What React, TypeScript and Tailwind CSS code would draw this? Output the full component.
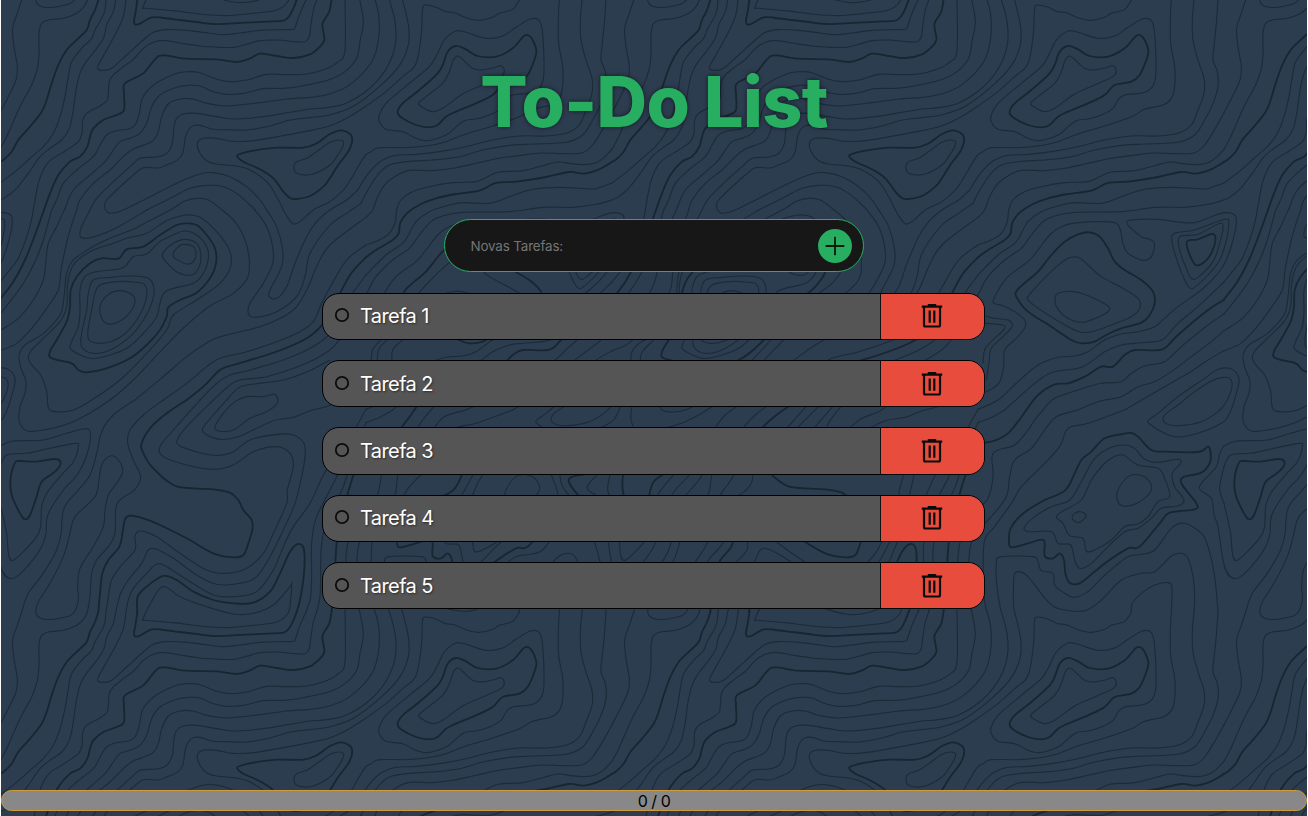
import React, { useState } from "react";

type Contour = { p: string; thick?: boolean; closed?: boolean };
type Region = { x: number; y: number; lines: Contour[] };

const o = (p: string, thick = false): Contour => ({ p, thick });
const c = (p: string, thick = false): Contour => ({ p, thick, closed: true });

// Elevation samples of the repeating topographic tile, grouped by map region.
const regions: Region[] = [
  {
    x: 0,
    y: 0,
    lines: [
      o("65,0 52,40 38,85 42,140 52,200 48,240 25,290 0,338"),
      o("262,0 252,20 230,40 190,55 150,59 125,70 117,100 117,160 112,205 95,255 60,320 20,410 0,448"),
      o("295,0 285,30 270,60 260,90 235,115 200,150 175,195 155,250 140,300 125,335 90,380 55,420 35,455 10,480 0,485", true),
      o("318,0 312,40 285,90 275,115 245,145 215,185 205,230 195,290 180,350 160,400 130,440 90,475 45,515 0,549"),
      o("347,0 340,35 320,75 312,110 290,145 255,190 240,220 228,270 220,330 208,385 185,420 150,445 120,470 85,520 50,565 20,590 0,600"),
      o("378,0 370,50 350,95 320,150 295,195 294,207 310,211 335,205 380,165 430,120 460,97 500,89 560,91 610,97 665,104 720,99 780,91 850,89 880,88 887,78 900,40 918,0"),
      o("412,0 407,35 402,62 405,73 420,71 455,52 490,54 540,60 590,66 640,72 700,70 740,68 800,65 850,62 868,48 880,25 890,0", true),
      o("950,0 940,30 932,80 928,110 915,125 885,125 830,120 780,122 740,133 700,142 660,142 600,138 540,129 490,121 460,127 430,145 400,178 370,200 340,225 328,245 325,280 322,300 300,318 260,340 248,360 246,400 235,425 200,450 150,482 130,510 115,550 105,600 100,630"),
      o("996,-11 988,34 968,69 970,95 973,120 960,140 930,163 880,174 830,168 780,161 750,175 710,186 650,178 560,176 490,166 465,178 430,220 375,250 372,280 372,330 350,345 310,360 280,385 270,410 262,440 240,470 210,485 175,525 150,580 132,630", true),
      o("1035,-11 1035,150 1015,185 975,208 920,222 860,224 800,223 740,240 690,245 650,238 600,218 565,215 530,220 470,248 440,275 425,300 418,340 405,375 385,387 345,393 320,405 300,435 280,470 230,510 190,550 170,600 155,630"),
      o("1077,-11 1090,64 1080,124 1070,175 1035,215 985,240 910,257 850,265 790,266 730,280 680,283 640,275 600,258 565,256 530,262 480,285 455,320 440,370 420,400 390,415 360,425 340,450 315,485 270,525 220,570 195,625"),
      o("1122,-11 1136,44 1136,114 1116,184 1050,254 985,283 930,292 860,297 780,308 680,318 620,310 580,297 540,297 505,312 485,350 475,395 455,425 400,447 370,470 330,510 280,550 240,600 230,630"),
      o("1165,-11 1185,64 1186,134 1160,204 1110,264 1040,309 980,323 930,327 870,337 790,350 710,357 650,350 590,340 550,342 530,355 522,380 517,430 500,460 470,471 420,475 390,500 340,545 290,595 270,630"),
      o("1205,-11 1225,74 1225,134 1200,194 1145,254 1060,319 990,344 930,353 870,360 810,378 740,390 680,389 640,388 600,376 575,380 558,405 548,460 530,482 500,495 475,504 430,503 400,525 350,570 320,600 313,618 325,638 345,638 375,628 450,590 540,545 600,522 640,518 690,530 740,560 780,600 800,630"),
      o("930,392 850,407 760,422 700,424 650,415 610,415 592,430 600,460 620,482 650,492 700,497 750,510 800,545 830,590 850,630"),
      c("990,402 950,430 910,443 830,443 760,452 720,462 712,470 730,485 780,508 820,535 850,575 870,594 890,597 930,588 970,560 990,534 1015,494 1048,449 1055,409 1025,391", true),
      c("990,427 950,455 920,475 890,485 882,505 895,522 940,522 990,495 1010,470 1028,440 1030,424 1015,420"),
      o("440,630 520,590 570,565 620,556 670,560 710,580 750,615 765,630"),
    ],
  },
  {
    x: 0,
    y: 600,
    lines: [
      o("100,30 92,70 80,110 55,175 25,215 0,245"),
      o("132,30 105,105 75,180 40,245 0,298", true),
      o("155,30 130,120 105,185 70,250 30,305 0,342"),
      o("195,25 170,80 145,130 137,190 130,240 100,300 55,355 0,392"),
      o("230,30 210,90 195,150 183,210 175,270 140,325 95,385 50,430 0,452"),
      c("515,28 430,72 400,88 330,115 270,145 220,180 200,220 192,290 180,345 130,400 75,435 57,465 62,500 78,545 75,580 60,620 58,665 80,692 130,690 220,665 330,600 410,530 490,445 560,375 630,318 700,280 742,235 748,180 735,120 705,65 660,25 625,0 590,-5 550,5"),
      c("145,622 140,575 125,530 100,500 85,475 95,450 130,415 180,365 200,320 203,250 220,195 270,155 340,130 380,115 440,100 500,62 560,45 600,52 650,95 688,150 692,200 660,250 590,300 520,345 500,390 440,460 360,540 275,600 220,630 165,635"),
      o("270,30 245,80 240,108 255,115 290,108 350,83 440,30"),
      c("560,70 590,75 620,105 645,145 648,190 630,235 590,278 540,300 505,322 500,350 480,390 440,435 390,475 320,505 260,517 235,510 215,490 155,475 150,455 170,420 200,365 210,320 212,270 230,230 270,190 305,175 355,176 380,148 430,140 480,105 530,75", true),
      c("553,93 590,105 620,140 625,175 610,220 580,250 500,272 480,310 470,350 430,400 380,445 320,468 270,475 215,450 213,430 235,380 240,330 240,270 255,230 290,215 350,208 375,200 400,170 440,162 480,125 520,105"),
      c("555,118 590,130 602,160 598,200 575,225 530,215 490,175 492,155 520,130"),
      c("550,133 580,140 588,165 580,185 560,192 525,175 520,160 535,140"),
      c("400,228 445,235 462,265 455,310 430,360 390,410 330,450 280,460 245,440 245,400 260,330 265,280 280,240 330,232"),
      c("300,255 350,245 400,246 435,255 438,300 410,360 370,405 320,428 275,425 263,400 275,330 285,280"),
      c("330,280 360,272 390,280 405,300 395,330 365,360 325,372 303,350 303,310"),
      o("850,30 865,55 880,72 900,65 940,30 990,5 1030,-30 1055,-66"),
      o("800,30 830,80 848,150 845,200 810,270 808,290 830,295 860,260 885,190 920,110 950,65 990,30 1040,0 1073,-30"),
      o("765,30 800,80 818,140 818,190 790,250 750,310 745,340 765,352 830,335 890,290 915,230 930,160 990,75 1040,40 1083,10"),
      o("405,600 490,530 560,470 640,418 700,400 780,380 850,350 890,320 925,260 950,200 990,135 1098,52"),
      o("490,600 560,550 620,500 660,475 740,455 830,425 900,395 940,365 965,310 990,262 1040,180 1098,135"),
      o("560,600 610,560 660,510 700,495 800,465 880,435 935,405 975,365 1000,320 1050,225 1098,172", true),
      o("600,600 650,550 690,525 750,510 850,480 930,445 990,400 1030,320 1098,225"),
      o("640,600 690,555 720,540 800,530 880,505 950,475 1010,430 1050,350 1098,285"),
      c("740,590 790,590 825,583 832,610 800,635 750,655 700,690 655,693 645,680 670,640 705,605"),
      o("990,480 930,512 850,540 740,555 710,568 680,600"),
    ],
  },
  {
    x: 0,
    y: 1200,
    lines: [
      o("405,0 340,45 305,95 290,160 270,225 235,270 200,310 188,340 183,400 170,450 130,520 85,580 65,636"),
      o("490,0 430,45 390,90 383,130 400,180 422,230 405,268 360,300 347,330 345,400 325,440 290,480 275,520 270,590 262,636"),
      c("330,168 355,180 368,215 350,250 325,285 315,330 310,380 280,440 240,505 233,560 235,600 220,640 180,655 130,657 108,640 115,605 150,550 190,470 210,400 225,350 285,290 297,240 305,195"),
      o("560,0 500,40 450,85 425,130 428,155 455,200 520,255 580,265 640,268 690,278 715,300 730,330 755,360 757,390 745,430 730,465 700,472 640,460 560,415 480,375 430,355 390,347 375,358 368,395 358,440 325,480 307,520 300,580 295,636", true),
      o("600,0 520,90 480,140 490,170 560,195 640,208 700,195 760,155 830,140 870,160 880,200 862,270 860,310 820,400 790,460 740,505 680,520 620,510 540,460 470,410 420,393 405,410 405,450 365,495 335,540 325,590 318,636"),
      o("640,0 560,80 532,120 540,138 600,158 650,166 700,155 750,120 830,103 880,105 912,130 915,170 905,230 885,310 850,390 810,470 770,530 720,550 650,553 590,525 520,475 470,448 445,450 425,490 385,540 362,580 347,636"),
      o("680,0 640,45 608,85 620,104 660,118 710,112 760,90 820,62 880,52 930,32 985,18 1040,-10"),
      o("1010,165 970,225 930,310 880,380 850,440 820,510 770,575 700,590 640,585 570,545 500,500 470,492 440,520 400,565 385,600 378,636"),
      o("412,636 413,590 440,560 490,528 530,540 580,575 640,600 700,610 760,608 810,575 840,520 870,455 895,432 912,450 912,520 900,600 890,636", true),
      c("430,655 460,595 480,565 500,562 540,590 620,620 700,642 760,640 820,615 870,560 875,550 872,600 864,640 830,666 760,676 680,683 600,678 520,668 440,661"),
      o("1098,28 1050,120 1010,230 950,350 935,430 935,520 932,590 918,636"),
      o("1098,68 1060,160 1030,260 985,350 965,430 962,520 960,590 950,636"),
      o("1118,128 1070,200 1030,330 1010,430 1005,520 1000,590 996,625", true),
      o("1098,325 1055,390 1040,450 1035,550 1035,625"),
      o("1098,390 1075,440 1070,520 1077,625"),
      o("0,138 40,123 130,120 200,100 250,87 270,95 265,150 235,220 190,270 150,330 140,360 138,400 125,440 90,490 50,530 27,535 8,515 0,495"),
      o("0,200 20,165 80,160 150,145 225,130 235,140 220,185 180,230 140,280 125,320 122,380 110,410 70,455 37,482 25,460 20,400 0,310"),
      c("45,188 60,183 110,185 165,177 182,190 165,215 125,245 110,290 90,345 75,358 60,340 35,285 32,235", true),
    ],
  },
  {
    x: 1098,
    y: 0,
    lines: [
      o("460,0 440,28 400,40 380,52 340,61 300,53 265,38 240,35 210,22 180,15 170,25 167,90 158,160 145,200 110,230 60,275 0,318 -50,350 -110,378 -168,392"),
      c("270,93 300,97 360,115 410,108 450,82 490,58 515,58 527,80 533,150 533,230 522,262 495,278 440,285 420,300 405,325 370,345 330,357 295,362 265,385 240,405 185,422 150,415 110,395 60,388 40,365 40,345 60,310 130,250 190,200 215,160 235,120"),
      c("270,138 300,148 335,168 390,170 440,145 475,107 495,112 511,150 505,180 485,225 460,245 410,255 380,285 330,310 270,335 240,350 215,375 190,382 150,375 105,352 95,335 110,310 160,270 215,220 232,190 245,155", true),
      c("275,168 290,178 320,205 345,210 385,203 405,197 415,212 405,230 350,255 290,282 230,325 200,335 170,322 158,310 180,290 230,250 250,215 262,180"),
      o("580,0 577,60 578,130 590,200 590,260 580,295 555,315 500,328 460,350 380,378 300,402 240,425 180,438 120,443 40,443 15,455 -5,470 -43,534"),
      o("648,0 643,60 645,120 660,180 678,235 678,280 660,330 640,375 600,400 540,408 460,408 380,420 300,440 220,455 150,463 90,466 50,480 20,505 0,530 -25,570"),
      o("720,0 715,70 708,140 705,180 718,215 720,260 705,310 680,360 650,405 600,427 500,432 430,436 350,450 280,470 200,480 130,484 70,495 35,525 0,580 -15,610"),
      o("738,338 715,380 680,435 650,458 600,461 530,459 480,464 400,475 330,490 260,505 200,512 130,511 95,525 60,550 35,590 20,630 0,652"),
      o("738,448 715,472 690,488 650,494 610,490 575,486 530,497 470,512 400,516 365,530 330,545 260,548 190,560 140,575 105,600 92,630 88,665 70,700 40,720 0,735"),
      o("738,485 720,497 690,512 650,521 610,516 540,531 450,545 390,549 340,572 270,582 210,595 165,612 125,638 103,668 98,700 80,720 30,750 0,772", true),
      o("738,549 700,562 680,567 580,562 500,568 430,590 370,610 290,608 240,618 190,635 150,665 130,700 110,730 60,765 0,825"),
    ],
  },
  {
    x: 1098,
    y: 600,
    lines: [
      o("738,0 690,13 620,22 530,22 430,35 290,37 230,48 195,65 160,105 130,145 80,180 30,230 0,285"),
      o("738,300 690,330 600,405 560,445 530,451 470,450 440,465 405,500 370,500 320,530 270,550 230,553 180,585 145,630", true),
      o("738,246 660,320 600,370 560,415 530,425 470,430 430,435 380,455 340,485 300,505 220,518 170,550 80,630"),
      o("0,628 60,600 120,545 180,495 240,472 290,468 330,455 380,420 430,402 480,395 530,380 560,355 600,320 670,270 720,220 745,180 765,120 775,70 770,45 740,38 700,50 650,68 600,66 540,58 460,60 447,70 465,90 490,110 520,120 530,133 520,170 495,181 450,160 435,130 427,90 415,70 380,65 300,68 250,80 215,105 180,150 150,185 90,230 50,290 48,310 75,317 110,335 140,360 140,385 110,420 80,450 77,500 65,545 45,565 25,575"),
      o("15,345 50,355 90,360 103,378 75,410 40,445 33,490 25,540"),
      o("20,370 75,375 78,388 45,420 20,450 15,490"),
      c("300,103 335,97 365,110 390,145 410,185 440,210 490,240 525,275 530,310 515,345 490,368 430,385 390,402 350,425 310,430 280,420 220,380 150,335 115,290 118,270 145,245 180,215 220,165 260,125", true),
      c("270,175 300,172 330,195 370,230 430,262 480,295 485,325 460,350 400,375 350,393 310,397 270,380 200,338 155,305 150,290 180,255 230,205"),
      c("240,280 280,274 325,285 390,318 390,335 360,352 320,366 290,364 255,345 233,315 232,293"),
      c("590,100 650,90 740,58 752,70 745,120 725,180 690,225 650,262 635,263 620,240 600,190 582,125"),
      c("605,110 660,103 725,70 735,85 725,130 705,185 660,232 640,235 625,205 605,150"),
      c("630,122 660,118 700,102 712,110 708,140 690,175 660,196 645,185 627,140", true),
      o("738,342 690,375 610,440 560,485 500,498 460,520 430,545 370,550 300,570 230,595 195,630"),
      o("738,392 700,425 640,470 580,515 530,545 480,560 430,590 360,605 300,630"),
      o("738,452 690,480 630,520 560,560 440,630"),
      c("540,640 600,590 680,535 720,508 760,507 783,535 775,580 755,640 730,670 660,700 600,711 560,700 515,672 512,660"),
      c("730,533 755,535 762,560 745,605 720,635 670,665 600,677 560,668 560,645 600,615 650,575 700,543"),
    ],
  },
  {
    x: 1098,
    y: 1200,
    lines: [
      o("145,30 120,65 90,100 50,122 20,128", true),
      o("80,30 45,50 0,68"),
      o("195,30 170,60 150,90 110,135 60,150 42,170 45,230 30,295 0,325"),
      o("300,30 235,50 200,90 160,145 110,180 95,230 85,290 40,350 0,390"),
      o("440,30 330,70 270,85 245,140 190,200 130,260 100,310 50,380 18,430 18,580 24,625"),
      c("435,102 460,99 480,110 520,150 560,155 660,156 690,140 698,160 695,190 670,218 615,232 613,255 655,310 650,328 575,338 545,370 485,440 450,445 390,483 350,515 305,550 275,548 262,520 258,480 245,460 225,475 200,468 197,420 150,430 100,442 93,420 98,385 130,345 190,305 260,272 290,220 310,180 340,155 380,115", true),
      c("440,135 470,145 500,178 540,187 600,178 608,190 583,220 590,260 618,300 600,318 550,325 520,355 480,385 440,395 390,440 340,490 305,505 290,480 278,435 240,430 220,395 150,395 140,380 170,350 220,320 275,300 310,245 350,175 400,142"),
      c("435,165 480,195 540,205 560,235 575,290 540,305 510,350 480,372 440,380 400,420 350,450 325,453 315,415 275,407 255,370 235,350 260,330 310,300 340,240 375,195 405,172"),
      c("420,270 450,230 485,225 515,245 518,275 480,308 435,318 418,300"),
      c("285,345 305,335 325,347 305,367 285,360"),
      o("67,625 57,560 55,490 70,470 165,470 180,485 190,512 225,520 230,555 260,580 290,592 330,575 370,535 410,500 450,470 490,463 530,450 580,385 620,370 670,400 690,440 710,530 720,636"),
      o("107,625 106,600 108,530 120,515 150,530 210,605 250,628 320,632 370,600 430,540 490,520 530,515 580,468 610,460 630,475 645,530 650,590 648,636"),
      o("460,636 462,612 490,580 530,555 570,548 582,565 580,636"),
      o("738,138 725,160 715,200 670,250 667,270 700,295 708,345 720,380 735,480 750,525 765,535"),
      o("738,200 725,265 738,310"),
    ],
  },
];

// Smooth curve through a list of samples.
function trace(line: Contour): string {
  const pts = line.p.split(" ").map((s) => s.split(",").map(Number));
  const n = pts.length;
  const at = (i: number) =>
    line.closed ? pts[(i + n) % n] : pts[Math.max(0, Math.min(n - 1, i))];
  let d = `M${pts[0][0]} ${pts[0][1]}`;
  const end = line.closed ? n : n - 1;
  for (let i = 0; i < end; i++) {
    const [a, b, e, f] = [at(i - 1), at(i), at(i + 1), at(i + 2)];
    d += `C${b[0] + (e[0] - a[0]) / 6} ${b[1] + (e[1] - a[1]) / 6} ${e[0] - (f[0] - b[0]) / 6} ${e[1] - (f[1] - b[1]) / 6} ${e[0]} ${e[1]}`;
  }
  return line.closed ? d + "Z" : d;
}

function Topography() {
  return (
    <svg className="absolute inset-0" width="1308" height="816" aria-hidden="true">
      <defs>
        <g id="contours" fill="none" strokeLinecap="round" transform="scale(0.33333)">
          {regions.map((r, i) => (
            <g key={i} transform={`translate(${r.x} ${r.y})`}>
              {r.lines.map((l, j) => (
                <path
                  key={j}
                  d={trace(l)}
                  stroke={l.thick ? "#182631" : "#1c2b38"}
                  strokeWidth={l.thick ? 5.4 : 3.3}
                />
              ))}
            </g>
          ))}
        </g>
      </defs>
      {[-612, 0, 612].map((y) =>
        [-612, 0, 612, 1224].map((x) => <use key={`${x}${y}`} href="#contours" x={x} y={y} />)
      )}
    </svg>
  );
}

function TrashIcon() {
  return (
    <svg width="24" height="26" viewBox="0 0 24 26" fill="none" stroke="#0b0b0b" strokeWidth="2.2">
      <path d="M1.8 3.6H22.2M7.8 2.2H16.2" />
      <path d="M4 3.5V22Q4 23.5 5.5 23.5H18.5Q20 23.5 20 22V3.5" />
      <path d="M9.7 7.5V19.8M14.3 7.5V19.8" />
    </svg>
  );
}

function Task({ name }: { name: string }) {
  return (
    <li className="flex h-[47.4px] w-[663px] overflow-hidden rounded-[17px] border-[1.5px] border-black bg-[#555555]">
      <div className="flex flex-1 items-center border-r border-[#111111] pl-[11px]">
        <svg className="mb-[2px]" width="16" height="16" viewBox="0 0 16 16">
          <circle cx="8" cy="8" r="6.2" fill="none" stroke="#0c0c0c" strokeWidth="1.8" />
        </svg>
        <span className="ml-[10px] text-[20px] leading-none tracking-[-0.6px] text-white [text-shadow:1px_1px_2px_rgba(0,0,0,0.5)]">
          {name}
        </span>
      </div>
      <button className="flex w-[103px] items-center justify-center bg-[#e74c3c] pr-px" aria-label="Remover">
        <TrashIcon />
      </button>
    </li>
  );
}

export default function App() {
  const [tasks] = useState(["Tarefa 1", "Tarefa 2", "Tarefa 3", "Tarefa 4", "Tarefa 5"]);
  return (
    <div className="h-[816px] w-[1308px] overflow-hidden bg-white px-px font-['Inter',sans-serif]">
      <main className="relative flex h-full flex-col items-center overflow-hidden bg-[#2d3d50]">
        <div className="absolute top-0 -left-px">
          <div className="relative h-[816px] w-[1308px]">
            <Topography />
          </div>
        </div>
        <h1 className="relative mt-[60px] text-[70px] leading-[84px] font-extrabold tracking-[-0.6px] whitespace-nowrap text-[#27ae60] [text-shadow:0_0_5px_rgba(0,0,0,0.6)]">
          To-Do List
        </h1>
        <div className="relative mt-[75px] flex h-[53px] w-[420px] items-center justify-between rounded-full border border-[#27ae60] bg-[#171717] pr-[11px] pl-[25.5px]">
          <input
            className="w-[250px] bg-transparent text-[13.4px] leading-none tracking-[-0.15px] text-white outline-none placeholder:text-[#757575]"
            placeholder="Novas Tarefas:"
          />
          <button className="flex size-[34px] items-center justify-center rounded-full bg-[#27ae60]" aria-label="Adicionar">
            <svg width="20" height="20" viewBox="0 0 20 20" stroke="#0a1a10" strokeWidth="1.8">
              <path d="M10 .7V19.3M.7 10H19.3" />
            </svg>
          </button>
        </div>
        <ul className="relative mt-[20.5px] mr-px flex flex-col gap-[20px]">
          {tasks.map((t) => (
            <Task key={t} name={t} />
          ))}
        </ul>
        <footer className="relative mt-auto mb-[5px] flex h-[21px] w-full shrink-0 items-center justify-center rounded-full border border-[#d19a3c] bg-[#888888] pt-px text-[16px] leading-none tracking-[-0.5px] text-black">
          0 / 0
        </footer>
      </main>
    </div>
  );
}
